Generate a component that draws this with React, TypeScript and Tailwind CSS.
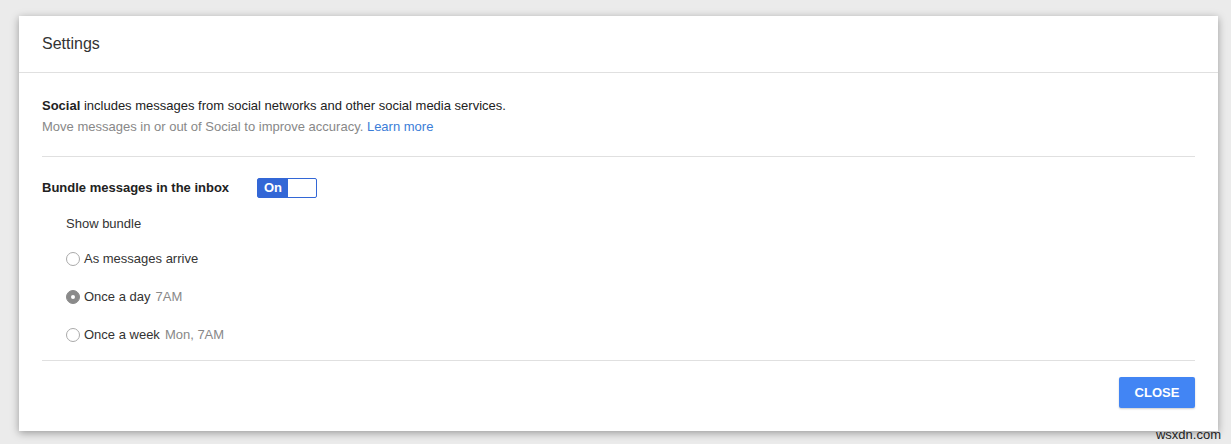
export default function App() {
  const radio = (label: string, extra: string, checked: boolean) => (
    <div className="flex items-center h-[38px]">
      <span className={`w-[14px] h-[14px] rounded-full border ${checked ? "border-[#8a8a8a] bg-[#8a8a8a]" : "border-[#aaa] bg-white"} flex items-center justify-center mr-[4px]`}>
        {checked && <span className="w-[4px] h-[4px] rounded-full bg-white" />}
      </span>
      <span className="text-[#333]">{label}</span>
      {extra && <span className="text-[#888] ml-[5px]">{extra}</span>}
    </div>
  );
  return (
    <div className="w-[1231px] h-[444px] bg-[#ebebeb] relative pt-[16px] pl-[19px]" style={{ fontFamily: "'Liberation Sans', Arial, sans-serif" }}>
      <div className="w-[1199px] h-[415px] bg-white shadow-[0_2px_8px_rgba(0,0,0,0.35)] flex flex-col">
        <div className="h-[57px] border-b border-[#e0e0e0] flex items-center pl-[23px] text-[16px] text-[#333]">Settings</div>
        <div className="px-[23px] flex-1 flex flex-col">
          <div className="border-b border-[#e0e0e0] pt-[22px] pb-[19px] text-[13px] leading-[21px]">
            <div className="text-[#222]"><b>Social</b> includes messages from social networks and other social media services.</div>
            <div className="text-[#888]">Move messages in or out of Social to improve accuracy. <span className="text-[#3b7dd8]">Learn more</span></div>
          </div>
          <div className="border-b border-[#e0e0e0] pt-[20px] pb-[6px] text-[13px]">
            <div className="flex items-center h-[21px]">
              <span className="font-bold text-[#222] w-[215px]">Bundle messages in the inbox</span>
              <div className="w-[60px] h-[20px] border border-[#3367d6] rounded-[2px] flex">
                <span className="w-[30px] bg-[#3367d6] text-white font-bold text-[13px] flex items-center justify-center">On</span>
              </div>
            </div>
            <div className="pl-[24px]">
              <div className="text-[#333] h-[21px] mt-[15px] mb-[6px] flex items-center">Show bundle</div>
              {radio("As messages arrive", "", false)}
              {radio("Once a day", "7AM", true)}
              {radio("Once a week", "Mon, 7AM", false)}
            </div>
          </div>
          <div className="flex justify-end pt-[16px]">
            <button className="w-[76px] h-[31px] bg-[#4285f4] text-white font-bold text-[13px] rounded-[2px] shadow-[0_1px_2px_rgba(0,0,0,0.2)]">CLOSE</button>
          </div>
        </div>
      </div>
      <span className="absolute right-[10px] bottom-[0px] text-[13px] text-[#222]">wsxdn.com</span>
    </div>
  );
}
